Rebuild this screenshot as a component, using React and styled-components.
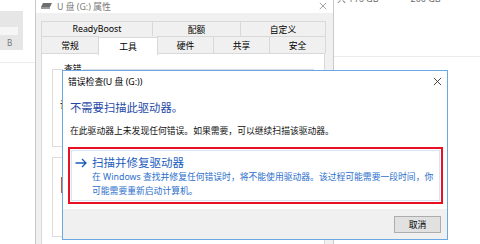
import React from "react";
import styled, { createGlobalStyle } from "styled-components";

const GlobalStyle = createGlobalStyle`
  html, body { margin: 0; padding: 0; background: #fff; }
  body {
    width: 480px; height: 244px; overflow: hidden;
    font-family: "Noto Sans", "Noto Sans CJK SC", sans-serif;
    -webkit-font-smoothing: antialiased;
  }
  * { box-sizing: border-box; }
`;

const Desktop = styled.div`
  position: relative;
  width: 480px;
  height: 244px;
  overflow: hidden;
  background: #fff;
`;

/* ---------- explorer behind ---------- */
const Explorer = styled.div`
  display: flex;
  height: 100%;
`;
const Sidebar = styled.div`
  width: 35px;
  display: flex;
  flex-direction: column;
  padding-top: 11px;
`;
const DriveTile = styled.div`
  width: 23px;
  height: 39px;
  background: #e6e6e6;
  padding-top: 16px;
  display: flex;
  flex-direction: column;
`;
const TileBar = styled.div`
  width: 18px;
  height: 8px;
  background: #f6f6f6;
`;
const TileLabel = styled.div`
  margin: 4px 0 0 7px;
  font-size: 8px;
  line-height: 8px;
  color: #777;
`;
const Rule = styled.div`
  height: 1px;
  background: #ececec;
  margin-top: ${(p) => p.$mt || 0}px;
`;
const ExplorerMain = styled.div`
  flex: 1;
  display: flex;
  flex-direction: column;
  padding-left: 298px;
`;
const DriveStrip = styled.div`
  display: flex;
  align-items: flex-start;
  height: 62px;
  margin-top: -6px;
  padding-left: 4px;
`;
const DriveInfo = styled.span`
  font-size: 9px;
  line-height: 10px;
  color: #6d6d6d;
  margin-left: ${(p) => p.$ml || 0}px;
  white-space: nowrap;
`;

/* ---------- properties window ---------- */
const PropsWindow = styled.div`
  position: absolute;
  left: 35px;
  top: -10px;
  width: 299px;
  height: 270px;
  border: 1px solid #c9c9c9;
  background: #f0f0f0;
  display: flex;
  flex-direction: column;
`;
const PropsTitleBar = styled.div`
  height: 22px;
  background: #fff;
  display: flex;
  align-items: center;
  padding: 8px 6px 0 5px;
`;
const PropsTitle = styled.span`
  font-size: 8.8px;
  color: #7a7a7a;
  margin-left: 5px;
  flex: 1;
`;
const PropsBody = styled.div`
  flex: 1;
  padding: 8px 7px 0 5px;
  display: flex;
  flex-direction: column;
`;
const TabRow = styled.div`
  display: flex;
  height: ${(p) => p.$h}px;
  position: relative;
  z-index: ${(p) => (p.$front ? 2 : 1)};
`;
const Tab = styled.div`
  width: ${(p) => p.$w}px;
  border: 1px solid #d9d9d9;
  border-bottom: none;
  margin-right: -1px;
  background: ${(p) => (p.$active ? "#fff" : "#f0f0f0")};
  font-size: 8.8px;
  color: #000;
  display: flex;
  align-items: center;
  justify-content: center;
  height: ${(p) => (p.$active ? "calc(100% + 1px)" : "100%")};
  margin-top: ${(p) => (p.$active ? 1 : 0)}px;
  position: relative;
  z-index: ${(p) => (p.$active ? 3 : 1)};
`;
const TabPanel = styled.div`
  flex: 1;
  width: 284px;
  background: #fff;
  border: 1px solid #d9d9d9;
  padding: 9px 10px 0 10px;
  display: flex;
  flex-direction: column;
`;
const GroupBox = styled.fieldset`
  margin: ${(p) => p.$mt}px 0 0 0;
  padding: 0 7px;
  border: 1px solid #dcdcdc;
  height: ${(p) => p.$h}px;
  min-width: 0;
`;
const GroupLegend = styled.legend`
  font-size: 8.8px;
  padding: 0 1px;
  margin-left: 3px;
  color: #000;
  line-height: 12px;
`;
const GroupText = styled.div`
  font-size: 8.8px;
  line-height: 12px;
  color: #000;
  margin-top: ${(p) => p.$mt}px;
  white-space: nowrap;
`;
const OptimizeIcon = styled.div`
  width: 14px;
  height: 16px;
  margin-top: 14px;
  margin-left: 1px;
  border-left: 2px solid #c4573c;
  background: #f3e4dc;
`;

/* ---------- error check dialog ---------- */
const Dialog = styled.div`
  position: absolute;
  left: 62px;
  top: 70px;
  width: 386px;
  height: 170px;
  border: 1px solid #6aa8e4;
  background: #fff;
  display: flex;
  flex-direction: column;
`;
const DialogTitleBar = styled.div`
  height: 21px;
  display: flex;
  align-items: center;
  justify-content: space-between;
  padding: 0 5px 0 5px;
`;
const DialogTitle = styled.span`
  font-size: 8.8px;
  color: #000;
`;
const DialogContent = styled.div`
  flex: 1;
  display: flex;
  flex-direction: column;
  padding: 0 4px 0 5px;
`;
const MainInstruction = styled.div`
  margin: 8px 0 0 2px;
  font-size: 11.3px;
  line-height: 16px;
  color: #1f4aa6;
`;
const BodyText = styled.div`
  margin: 9px 0 0 2px;
  font-size: 8.8px;
  line-height: 12px;
  color: #111;
  white-space: nowrap;
`;
const Highlight = styled.div`
  margin-top: 10px;
  height: 57px;
  border: 2px solid #e81123;
  padding: 1px;
  display: flex;
`;
const CommandLink = styled.div`
  flex: 1;
  border: 1px solid #d6e4f4;
  display: flex;
  align-items: flex-start;
  padding: 4px 0 0 3px;
`;
const ArrowWrap = styled.div`
  width: 17px;
  height: 14px;
  display: flex;
  align-items: center;
  margin-top: 1px;
`;
const CommandText = styled.div`
  display: flex;
  flex-direction: column;
`;
const CommandTitle = styled.div`
  font-size: 11.5px;
  line-height: 15px;
  color: #1a5cbc;
  white-space: nowrap;
`;
const CommandNote = styled.div`
  font-size: 8.8px;
  line-height: 14px;
  color: #2c6fcc;
  white-space: nowrap;
  margin-top: ${(p) => p.$mt || 0}px;
`;
const DialogFooter = styled.div`
  height: 30px;
  background: #f0f0f0;
  display: flex;
  align-items: center;
  justify-content: flex-end;
  padding: 0 6px 0 0;
`;
const Button = styled.button`
  width: 47px;
  height: 17px;
  margin-top: 1px;
  background: #e1e1e1;
  border: 1px solid #adadad;
  font-family: inherit;
  font-size: 8.8px;
  color: #000;
  padding: 0;
  display: flex;
  align-items: center;
  justify-content: center;
`;

const CloseIcon = ({ color = "#333", size = 9 }) => (
  <svg width={size} height={size} viewBox="0 0 10 10">
    <path d="M1 1 L9 9 M9 1 L1 9" stroke={color} strokeWidth="1" fill="none" />
  </svg>
);

const DriveGlyph = () => (
  <svg width="11" height="6" viewBox="0 0 11 6">
    <path d="M2 0 H11 L9 4 H0 Z" fill="#6e6e6e" />
    <rect x="0" y="4" width="9" height="2" fill="#9a9a9a" />
  </svg>
);

const HddGlyph = () => (
  <svg width="12" height="6" viewBox="0 0 12 6">
    <rect x="0" y="0" width="12" height="3" fill="#8a8a8a" />
    <path d="M3 3 H9 L8 5 H4 Z" fill="#666" />
  </svg>
);

const Arrow = () => (
  <svg width="12" height="10" viewBox="0 0 12 10">
    <path d="M0.5 5 H11 M7 1 L11 5 L7 9" stroke="#1a5cbc" strokeWidth="1.3" fill="none" />
  </svg>
);

export default function App() {
  return (
    <>
      <GlobalStyle />
      <Desktop>
        <Explorer>
          <Sidebar>
            <DriveTile>
              <TileBar />
              <TileLabel>B</TileLabel>
            </DriveTile>
            <Rule $mt={12} />
          </Sidebar>
          <ExplorerMain>
            <DriveStrip>
              <DriveInfo>共 116 GB</DriveInfo>
              <HddGlyph />
              <DriveInfo $ml={20}>200 GB</DriveInfo>
            </DriveStrip>
            <Rule />
          </ExplorerMain>
        </Explorer>

        <PropsWindow>
          <PropsTitleBar>
            <DriveGlyph />
            <PropsTitle>U 盘 (G:) 属性</PropsTitle>
            <CloseIcon color="#8a8a8a" size={8} />
          </PropsTitleBar>
          <PropsBody>
            <TabRow $h={15}>
              <Tab $w={112}>ReadyBoost</Tab>
              <Tab $w={89}>配额</Tab>
              <Tab $w={86}>自定义</Tab>
            </TabRow>
            <TabRow $h={17} $front>
              <Tab $w={58}>常规</Tab>
              <Tab $w={60} $active>工具</Tab>
              <Tab $w={57}>硬件</Tab>
              <Tab $w={57}>共享</Tab>
              <Tab $w={57}>安全</Tab>
            </TabRow>
            <TabPanel>
              <GroupBox $mt={0} $h={84}>
                <GroupLegend>查错</GroupLegend>
                <GroupText $mt={24}>该选项将检查驱动器中的文件系统错误。</GroupText>
              </GroupBox>
              <GroupBox $mt={4} $h={86}>
                <GroupLegend>对驱动器进行优化和碎片整理</GroupLegend>
                <OptimizeIcon />
              </GroupBox>
            </TabPanel>
          </PropsBody>
        </PropsWindow>

        <Dialog>
          <DialogTitleBar>
            <DialogTitle>错误检查(U 盘 (G:))</DialogTitle>
            <CloseIcon />
          </DialogTitleBar>
          <DialogContent>
            <MainInstruction>不需要扫描此驱动器。</MainInstruction>
            <BodyText>在此驱动器上未发现任何错误。如果需要，可以继续扫描该驱动器。</BodyText>
            <Highlight>
              <CommandLink>
                <ArrowWrap>
                  <Arrow />
                </ArrowWrap>
                <CommandText>
                  <CommandTitle>扫描并修复驱动器</CommandTitle>
                  <CommandNote>在 Windows 查找并修复任何错误时，将不能使用驱动器。该过程可能需要一段时间，你</CommandNote>
                  <CommandNote>可能需要重新启动计算机。</CommandNote>
                </CommandText>
              </CommandLink>
            </Highlight>
          </DialogContent>
          <DialogFooter>
            <Button>取消</Button>
          </DialogFooter>
        </Dialog>
      </Desktop>
    </>
  );
}
